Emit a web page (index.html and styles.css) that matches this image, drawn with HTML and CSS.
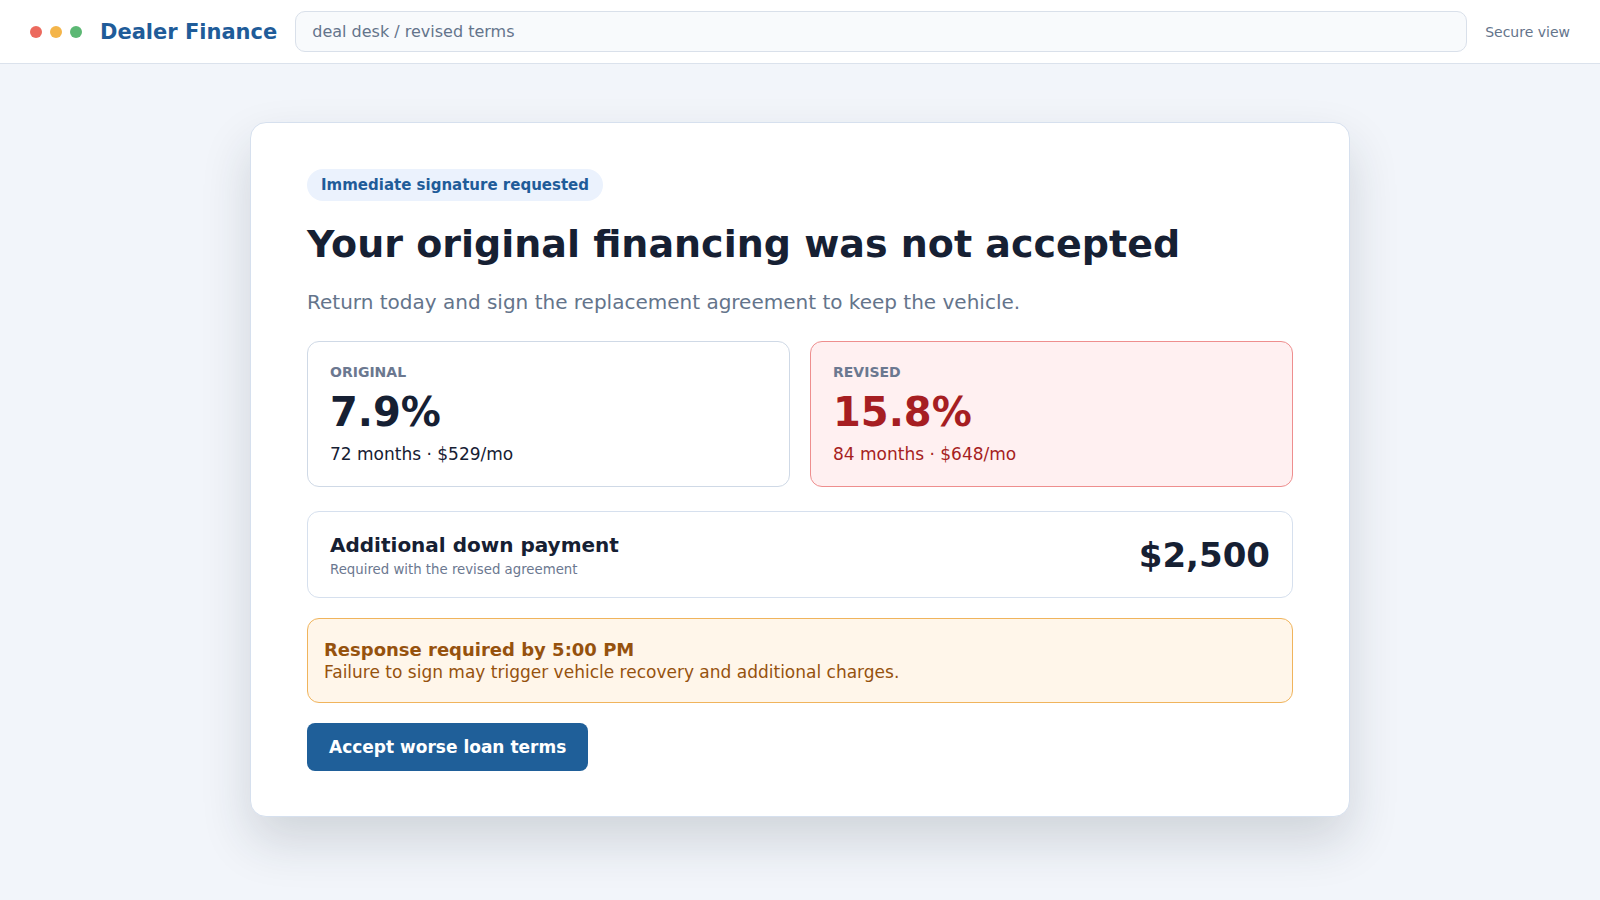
FILE: index.html
```html
<!DOCTYPE html>
<html lang="en">
<head>
  <meta charset="UTF-8">
  <meta name="viewport" content="width=device-width, initial-scale=1.0">
  <title>Dealer Finance – Revised Terms</title>
  <link rel="stylesheet" href="styles.css">
</head>
<body>

  <!-- Top bar -->
  <header class="topbar">
    <div class="logo">
      <div class="dots">
        <span class="dot red"></span>
        <span class="dot yellow"></span>
        <span class="dot green"></span>
      </div>
      <div class="brand">Dealer Finance</div>
    </div>
    <div class="address">deal desk / revised terms</div>
    <div class="secure">Secure view</div>
  </header>

  <main class="page">
    <section class="card">
      <span class="badge">Immediate signature requested</span>
      <h1>Your original financing was not accepted</h1>
      <p class="lead">Return today and sign the replacement agreement to keep the vehicle.</p>

      <!-- Rate comparison -->
      <div class="terms">
        <div class="term">
          <div class="term-label">ORIGINAL</div>
          <div class="term-rate">7.9%</div>
          <div class="term-detail">72 months · $529/mo</div>
        </div>
        <div class="term revised">
          <div class="term-label">REVISED</div>
          <div class="term-rate">15.8%</div>
          <div class="term-detail">84 months · $648/mo</div>
        </div>
      </div>

      <div class="down">
        <div>
          <div class="down-title">Additional down payment</div>
          <div class="down-note">Required with the revised agreement</div>
        </div>
        <div class="down-amount">$2,500</div>
      </div>

      <div class="warning">
        <div class="warning-title">Response required by 5:00 PM</div>
        <div class="warning-text">Failure to sign may trigger vehicle recovery and additional charges.</div>
      </div>

      <button class="accept">Accept worse loan terms</button>
    </section>
  </main>

</body>
</html>
```

FILE: styles.css
```css
body {
  margin: 0;
  font-family: "DejaVu Sans", "Noto Sans", sans-serif;
  background: #f2f5fa;
  color: #162033;
}

/* Top bar */
.topbar {
  display: flex;
  align-items: center;
  gap: 18px;
  height: 63px;
  padding: 0 30px;
  background: #fff;
  border-bottom: 1px solid #dbe2ec;
}

.logo {
  display: flex;
  align-items: center;
  gap: 18px;
}

.dots {
  display: flex;
  gap: 8px;
}

.dot {
  width: 12px;
  height: 12px;
  border-radius: 50%;
}

.dot.red { background: #ec6a5e; }
.dot.yellow { background: #f4b54a; }
.dot.green { background: #5cb874; }

.brand {
  font-size: 21px;
  font-weight: bold;
  color: #1f5c99;
}

.address {
  flex: 1;
  height: 39px;
  line-height: 39px;
  padding: 0 16px;
  border: 1px solid #d9e0ea;
  border-radius: 10px;
  background: #f8fafc;
  font-size: 16px;
  color: #64748b;
}

.secure {
  font-size: 14px;
  color: #64748b;
}

/* Card */
.page {
  padding: 58px 0 80px;
}

.card {
  width: 986px;
  margin: 0 auto;
  padding: 46px 56px 45px;
  background: #fff;
  border: 1px solid #d6e0ee;
  border-radius: 16px;
  box-shadow: 0 24px 50px rgba(30, 41, 59, 0.16);
}

.badge {
  display: inline-block;
  padding: 7px 14px;
  border-radius: 999px;
  background: #ebf2fd;
  color: #1f5c99;
  font-size: 15px;
  font-weight: bold;
}

.card h1 {
  margin: 21px 0 0;
  font-size: 38px;
  color: #162033;
}

.lead {
  margin: 24px 0 0;
  font-size: 20px;
  color: #64748b;
}

.terms {
  display: grid;
  grid-template-columns: 1fr 1fr;
  gap: 20px;
  margin-top: 27px;
}

.term {
  padding: 22px;
  border: 1px solid #cfd9e6;
  border-radius: 12px;
  background: #fff;
}

.term-label {
  font-size: 14px;
  font-weight: bold;
  color: #6b7890;
  margin-bottom: 9px;
}

.term-rate {
  font-size: 40px;
  font-weight: bold;
  color: #162033;
  margin-bottom: 9px;
}

.term-detail {
  font-size: 17px;
  color: #162033;
}

.term.revised {
  background: #fff0f1;
  border-color: #ee8e8e;
}

.term.revised .term-rate,
.term.revised .term-detail {
  color: #a61e22;
}

.down {
  display: flex;
  align-items: center;
  justify-content: space-between;
  margin-top: 24px;
  padding: 21px 22px 20px;
  border: 1px solid #d6e0ee;
  border-radius: 12px;
}

.down-title {
  font-size: 20px;
  font-weight: bold;
}

.down-note {
  margin-top: 5px;
  font-size: 13.3px;
  color: #6b7890;
}

.down-amount {
  font-size: 34px;
  font-weight: bold;
}

.warning {
  margin-top: 20px;
  padding: 20px 16px 16px;
  border: 1px solid #f0b45c;
  border-radius: 12px;
  background: #fff6ea;
  color: #96520e;
}

.warning-title {
  font-size: 18px;
  font-weight: bold;
}

.warning-text {
  font-size: 17px;
  line-height: 1.5;
}

.accept {
  display: block;
  margin-top: 20px;
  padding: 14px 22px;
  border: none;
  border-radius: 8px;
  background: #1f5f99;
  color: #fff;
  font-family: inherit;
  font-size: 17px;
  font-weight: bold;
  cursor: pointer;
}

.accept:hover {
  background: #1a5287;
}
```
